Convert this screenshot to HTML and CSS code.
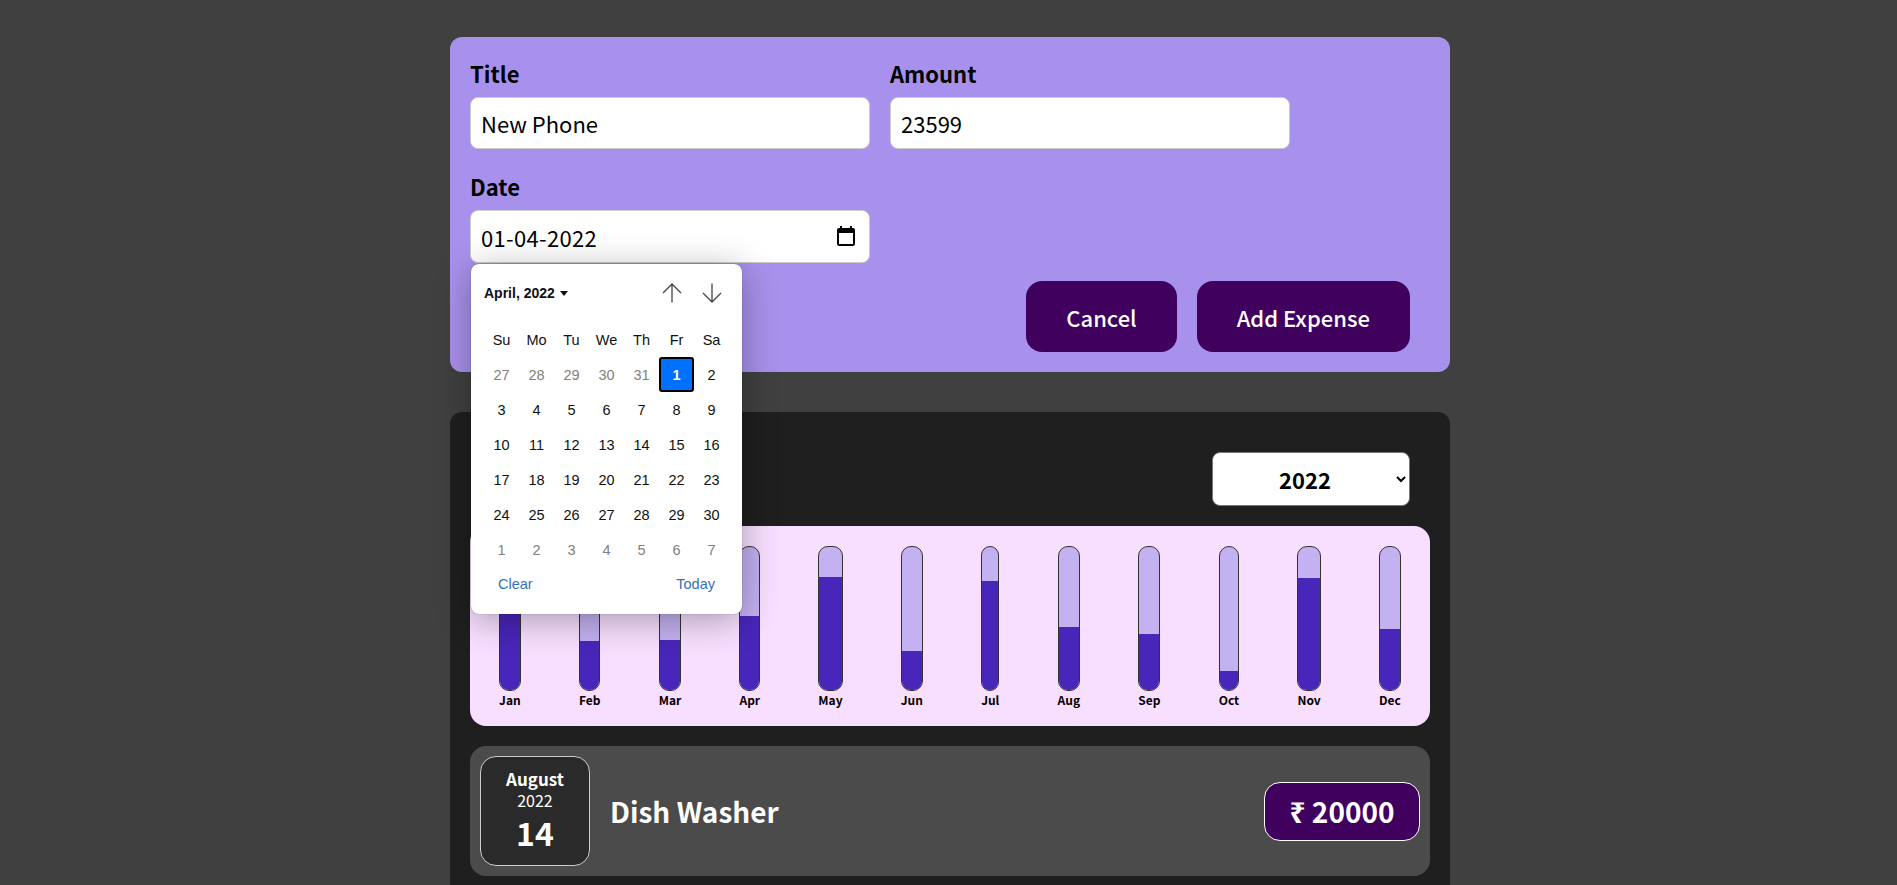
FILE: index.html
```html
<!DOCTYPE html>
<html lang="en">
<head>
<meta charset="utf-8">
<title>Expenses</title>
<link rel="stylesheet" href="styles.css">
</head>
<body>
<main class="page">
  <form class="form-card">
    <div class="fields">
      <div class="field">
        <label class="field-label">Title</label>
        <input class="field-input" type="text" value="New Phone">
      </div>
      <div class="field">
        <label class="field-label">Amount</label>
        <input class="field-input" type="text" value="23599">
      </div>
      <div class="field">
        <label class="field-label">Date</label>
        <div class="date-wrap">
          <input class="field-input date-input" type="text" value="01-04-2022">
          <svg class="date-icon" viewBox="0 0 24 24" width="24" height="24"><path fill="#000" d="M19 4h-1V2h-2v2H8V2H6v2H5c-1.1 0-2 .9-2 2v14c0 1.1.9 2 2 2h14c1.1 0 2-.9 2-2V6c0-1.100-.9-2-2-2zm0 16H5V9h14v11z"/></svg>
          <div class="picker">
            <div class="picker-head">
              <span class="picker-month">April, 2022<i class="caret"></i></span>
              <span class="picker-arrows">
                <svg viewBox="0 0 20 20" width="20" height="20"><path d="M10 19.500V1M1 10l9-9 9 9" fill="none" stroke="#444" stroke-width="1.300"/></svg>
                <svg viewBox="0 0 20 20" width="20" height="20"><path d="M10 .5V19M1 10l9 9 9-9" fill="none" stroke="#444" stroke-width="1.300"/></svg>
              </span>
            </div>
            <div class="picker-grid">
              <span>Su</span><span>Mo</span><span>Tu</span><span>We</span><span>Th</span><span>Fr</span><span>Sa</span>
              <span class="muted">27</span><span class="muted">28</span><span class="muted">29</span><span class="muted">30</span><span class="muted">31</span><span class="selected">1</span><span>2</span>
              <span>3</span><span>4</span><span>5</span><span>6</span><span>7</span><span>8</span><span>9</span>
              <span>10</span><span>11</span><span>12</span><span>13</span><span>14</span><span>15</span><span>16</span>
              <span>17</span><span>18</span><span>19</span><span>20</span><span>21</span><span>22</span><span>23</span>
              <span>24</span><span>25</span><span>26</span><span>27</span><span>28</span><span>29</span><span>30</span>
              <span class="muted">1</span><span class="muted">2</span><span class="muted">3</span><span class="muted">4</span><span class="muted">5</span><span class="muted">6</span><span class="muted">7</span>
            </div>
            <div class="picker-foot"><span>Clear</span><span>Today</span></div>
          </div>
        </div>
      </div>
    </div>
    <div class="actions">
      <button class="btn" type="button">Cancel</button>
      <button class="btn" type="button">Add Expense</button>
    </div>
  </form>

  <section class="list-card">
    <div class="filter">
      <select class="year"><option>2022</option><option>2021</option></select>
    </div>
    <div class="chart">
      <div class="col"><div class="bar"><div class="fill" style="height:80%"></div></div><span class="col-label">Jan</span></div>
      <div class="col"><div class="bar"><div class="fill" style="height:34%"></div></div><span class="col-label">Feb</span></div>
      <div class="col"><div class="bar"><div class="fill" style="height:35%"></div></div><span class="col-label">Mar</span></div>
      <div class="col"><div class="bar"><div class="fill" style="height:52%"></div></div><span class="col-label">Apr</span></div>
      <div class="col"><div class="bar"><div class="fill" style="height:79%"></div></div><span class="col-label">May</span></div>
      <div class="col"><div class="bar"><div class="fill" style="height:27%"></div></div><span class="col-label">Jun</span></div>
      <div class="col"><div class="bar"><div class="fill" style="height:76%"></div></div><span class="col-label">Jul</span></div>
      <div class="col"><div class="bar"><div class="fill" style="height:44%"></div></div><span class="col-label">Aug</span></div>
      <div class="col"><div class="bar"><div class="fill" style="height:39%"></div></div><span class="col-label">Sep</span></div>
      <div class="col"><div class="bar"><div class="fill" style="height:13%"></div></div><span class="col-label">Oct</span></div>
      <div class="col"><div class="bar"><div class="fill" style="height:78%"></div></div><span class="col-label">Nov</span></div>
      <div class="col"><div class="bar"><div class="fill" style="height:43%"></div></div><span class="col-label">Dec</span></div>
    </div>
    <article class="item">
      <div class="date-box">
        <span class="date-month">August</span>
        <span class="date-year">2022</span>
        <span class="date-day">14</span>
      </div>
      <h2 class="item-title">Dish Washer</h2>
      <div class="item-price">₹ 20000</div>
    </article>
  </section>
</main>
</body>
</html>
```
FILE: styles.css
```css
* { box-sizing: border-box; }
html, body { margin: 0; height: 885px; overflow: hidden; }
body {
  background: #404040;
  font-family: "Noto Sans CJK JP", "Noto Sans", sans-serif;
  padding: 37px 0 0 3px;
}
.page { width: 1000px; margin: 0 auto; display: flex; flex-direction: column; gap: 40px; }

.form-card { background: #a891ec; border-radius: 12px; padding: 20px 20px 20px; height: 335px; display: flex; flex-direction: column; }
.fields { display: flex; flex-wrap: wrap; gap: 21px 20px; }
.field { width: 400px; display: flex; flex-direction: column; }
.field-label { font-size: 22px; font-weight: 700; line-height: 32px; margin-bottom: 8px; color: #000; }
.field-input { width: 100%; height: 52px; border: 1px solid #ccc; border-radius: 8px; padding: 0 10px; font: 400 22px "Noto Sans CJK JP", "Noto Sans", sans-serif; color: #000; background: #fff; outline: 0; }
.date-wrap { position: relative; }
.date-input { height: 53px; display: block; letter-spacing: .3px; }
.date-icon { position: absolute; right: 12px; top: 14px; }

.picker { position: absolute; left: 1px; top: 54px; width: 271px; height: 350px; background: #fff; border-radius: 8px; padding: 0 13px; z-index: 5; box-shadow: 0 6px 36px rgba(0,0,0,.32), 0 0 1px rgba(0,0,0,.5); font-family: "Liberation Sans", Arial, sans-serif; color: #111; }
.picker-head { height: 58px; display: flex; justify-content: space-between; align-items: center; padding: 0 0 0 0; }
.picker-month { font-size: 14px; font-weight: 700; display: flex; align-items: center; gap: 5px; }
.caret { width: 0; height: 0; border: 4.5px solid transparent; border-top: 5px solid #111; border-bottom: 0; }
.picker-arrows { display: flex; gap: 20px; margin-right: 7px; }
.picker-grid { display: grid; grid-template-columns: repeat(7, 35px); grid-auto-rows: 35px; font-size: 14.500px; align-items: center; justify-items: center; }
.picker-grid span { width: 35px; height: 35px; display: flex; align-items: center; justify-content: center; }
.picker-grid .muted { color: #808080; }
.picker-grid .selected { background: #0070ff; color: #fff; font-weight: 700; border: 2px solid #000; border-radius: 3px; }
.picker-foot { display: flex; justify-content: space-between; padding: 9px 14px 0 14px; font-size: 14.500px; color: #2f73b8; }

.actions { margin-top: auto; display: flex; justify-content: flex-end; gap: 20px; padding-right: 20px; }
.btn { height: 71px; padding: 0 40px; border: 0; border-radius: 16px; background: #40005d; color: #fff; font: 500 22px "Noto Sans CJK JP", "Noto Sans", sans-serif; }

.list-card { background: #1f1f1f; border-radius: 12px; padding: 40px 20px 20px; height: 520px; display: flex; flex-direction: column; gap: 20px; }
.filter { display: flex; justify-content: flex-end; padding-right: 20px; }
.year { width: 198px; height: 54px; border: 1px solid #777; border-radius: 8px; background: #fff; color: #000; text-align: center; font: 700 22px "Noto Sans CJK JP", "Noto Sans", sans-serif; }

.chart { height: 200px; background: #f8dfff; border-radius: 16px; padding: 20px 0 0; display: flex; justify-content: space-around; }
.col { display: flex; flex-direction: column; align-items: stretch; }
.bar { height: 145px; background: #c3b1f1; border: 1px solid #333; border-radius: 10px; overflow: hidden; display: flex; flex-direction: column; justify-content: flex-end; }
.fill { background: #4826b9; }
.col-label { font-size: 12px; font-weight: 700; line-height: 18px; text-align: center; color: #000; }

.item { height: 130px; background: #4b4b4b; border-radius: 16px; padding: 10px; display: flex; align-items: center; gap: 20px; color: #fff; }
.date-box { width: 110px; height: 110px; background: #2a2a2a; border: 1px solid #ccc; border-radius: 16px; display: flex; flex-direction: column; align-items: center; justify-content: center; }
.date-month { font-size: 17px; font-weight: 700; line-height: 22px; }
.date-year { font-size: 16px; line-height: 20px; }
.date-day { font-size: 32px; font-weight: 700; line-height: 44px; }
.item-title { margin: 0; font-size: 28px; font-weight: 700; flex: 1; }
.item-price { width: 156px; height: 59px; background: #40005d; border: 1px solid #fff; border-radius: 16px; display: flex; align-items: center; justify-content: center; font-size: 28px; font-weight: 700; }
```
